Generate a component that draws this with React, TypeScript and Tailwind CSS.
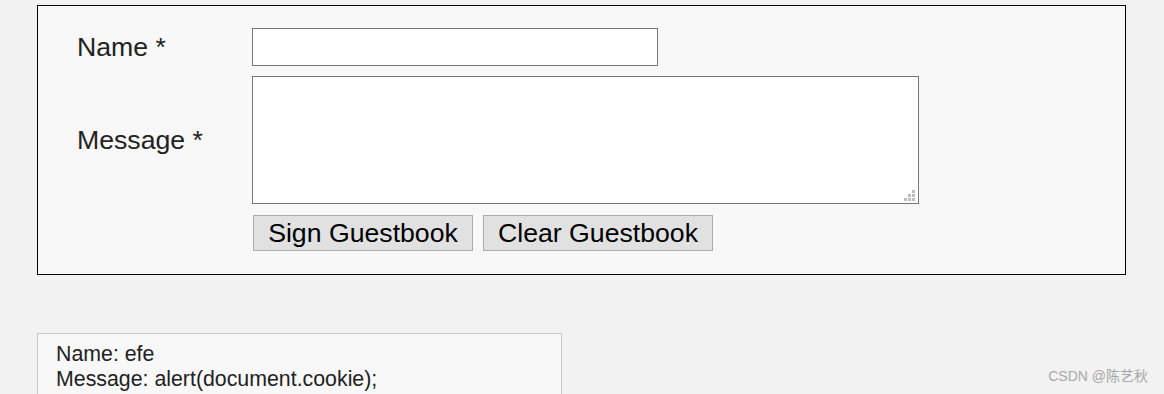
export default function App() {
  return (
    <div className="relative h-[394px] w-[1164px] overflow-hidden bg-[#f2f2f2] font-['Liberation_Sans',Arial,sans-serif] text-[#222]">
      {/* guestbook form */}
      <div className="ml-[37px] mt-[5px] h-[270px] w-[1089px] border border-black bg-[#f7f8f7] pl-[39px] pt-[22px]">
        <div className="flex items-center">
          <label className="w-[175px] text-[26.67px] leading-none">Name *</label>
          <input className="h-[38px] w-[406px] border border-[#767676] bg-white outline-none" />
        </div>
        <div className="mt-[10px] flex items-center">
          <label className="w-[175px] text-[26.67px] leading-none">Message *</label>
          <div className="relative">
            <textarea className="block h-[128px] w-[667px] resize-none border border-[#767676] bg-white outline-none" />
            {/* resize grip */}
            <svg className="absolute left-[652px] top-[114px]" width="11" height="11" viewBox="0 0 11 11">
              <rect x="8" y="0" width="3" height="3" fill="#bdbdbd" />
              <rect x="4" y="4" width="3" height="3" fill="#bdbdbd" />
              <rect x="8" y="4" width="3" height="3" fill="#bdbdbd" />
              <rect x="0" y="8" width="3" height="3" fill="#bdbdbd" />
              <rect x="4" y="8" width="3" height="3" fill="#bdbdbd" />
              <rect x="8" y="8" width="3" height="3" fill="#bdbdbd" />
            </svg>
          </div>
        </div>
        <div className="ml-[176px] mt-[11px] flex gap-[10px]">
          <button className="h-[36px] w-[220px] border border-[#adadad] bg-[#e1e1e1] text-[26.67px] leading-none text-black">
            Sign Guestbook
          </button>
          <button className="h-[36px] w-[230px] border border-[#adadad] bg-[#e1e1e1] text-[26.67px] leading-none text-black">
            Clear Guestbook
          </button>
        </div>
      </div>

      {/* entry */}
      <div className="ml-[37px] mt-[58px] h-[80px] w-[525px] border border-[#c8c8c8] bg-[#f7f8f7] pl-[18px] pt-[8px] text-[21.33px] leading-[25px]">
        <div>Name: efe</div>
        <div>Message: alert(document.cookie);</div>
      </div>

      <div className="absolute bottom-[7px] right-[16px] font-['Liberation_Sans','Noto_Sans_CJK_SC',sans-serif] text-[14px] text-[#a8a8a8]">
        CSDN @陈艺秋
      </div>
    </div>
  );
}
